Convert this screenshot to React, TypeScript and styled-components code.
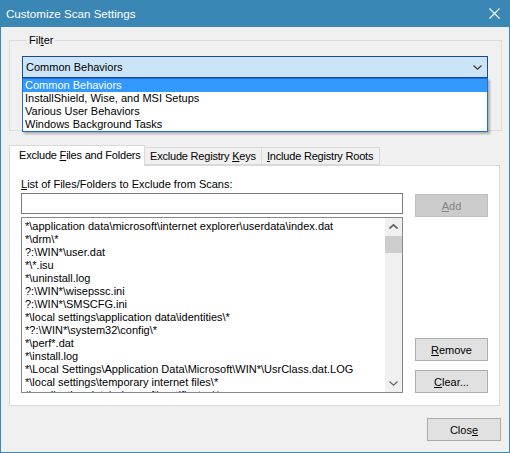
import React from 'react';
import styled, { createGlobalStyle } from 'styled-components';

const GlobalStyle = createGlobalStyle`
  html, body { margin: 0; padding: 0; background: #f0f0f0; }
  body {
    font-family: 'Liberation Sans', Arial, sans-serif;
    font-size: 11px;
    color: #000;
  }
  * { box-sizing: border-box; }
`;

const Window = styled.div`
  width: 510px;
  height: 453px;
  display: flex;
  flex-direction: column;
  background: #f0f0f0;
  border: 1px solid #3a86b4;
  border-top: none;
  overflow: hidden;
`;

const TitleBar = styled.div`
  height: 27px;
  flex-shrink: 0;
  margin: 0 -1px;
  background: #3a86b4;
  color: #fff;
  display: flex;
  align-items: center;
  justify-content: space-between;
  padding: 0 10px 1px 6px;
  font-size: 11.6px;
`;

const CloseGlyph = styled.svg`
  display: block;
`;

const Body = styled.div`
  flex: 1;
  min-height: 0;
  display: flex;
  flex-direction: column;
  padding: 6px 7px 11px 8px;
`;

const GroupBox = styled.fieldset`
  margin: 0;
  height: 98px;
  flex-shrink: 0;
  border: 1px solid #dcdcdc;
  padding: 7px 13px 0 12px;
  min-width: 0;
`;

const GroupLegend = styled.legend`
  margin-left: 5px;
  padding: 0 2px;
  line-height: 15px;
`;

const ComboWrap = styled.div`
  position: relative;
  margin-top: 1px;
`;

const Combo = styled.div`
  height: 22px;
  border: 1px solid #1a4a96;
  background: #cce4f7;
  display: flex;
  align-items: center;
  justify-content: space-between;
  padding: 0 5px 0 3px;
`;

const DropList = styled.div`
  position: absolute;
  top: 100%;
  left: 0;
  right: 0;
  z-index: 2;
  background: #fff;
  border: 1px solid #1c6fd8;
  box-shadow: 2px 2px 2px rgba(0, 0, 0, 0.28);
`;

const DropItem = styled.div<{ $selected?: boolean }>`
  height: 13px;
  line-height: 13px;
  padding-left: 2px;
  white-space: nowrap;
  background: ${(p) => (p.$selected ? '#3399ff' : 'transparent')};
  color: ${(p) => (p.$selected ? '#fff' : '#000')};
`;

const TabStrip = styled.div`
  margin-top: 14px;
  height: 20px;
  flex-shrink: 0;
  display: flex;
  align-items: flex-end;
`;

const Tab = styled.div<{ $active?: boolean; $width: number; $inset: number }>`
  width: ${(p) => p.$width}px;
  height: ${(p) => (p.$active ? '21px' : '18px')};
  margin-bottom: ${(p) => (p.$active ? '-1px' : '0')};
  margin-left: ${(p) => (p.$active ? '0' : '-1px')};
  padding: ${(p) => (p.$active ? '3px' : '2px')} 0 0 ${(p) => p.$inset}px;
  border: 1px solid #d9d9d9;
  border-bottom: ${(p) => (p.$active ? 'none' : '1px solid #d9d9d9')};
  background: ${(p) => (p.$active ? '#fff' : '#f0f0f0')};
  position: relative;
  z-index: ${(p) => (p.$active ? 1 : 0)};
  white-space: nowrap;
  overflow: hidden;
  line-height: 13px;
  letter-spacing: -0.2px;
`;

const TabPanel = styled.div`
  height: 241px;
  flex-shrink: 0;
  margin-right: 2px;
  background: #fff;
  border: 1px solid #d9d9d9;
  padding: 11px 11px 12px 11px;
  display: flex;
  flex-direction: column;
`;

const FieldLabel = styled.div`
  height: 15px;
  line-height: 15px;
  margin-bottom: 1px;
`;

const PanelRow = styled.div`
  flex: 1;
  min-height: 0;
  display: flex;
  gap: 12px;
`;

const InputColumn = styled.div`
  width: 382px;
  min-height: 0;
  display: flex;
  flex-direction: column;
  gap: 3px;
`;

const TextBox = styled.div`
  height: 21px;
  flex-shrink: 0;
  border: 1px solid #7a7a7a;
  background: #fff;
`;

const ListBox = styled.div`
  flex: 1;
  min-height: 0;
  display: flex;
  border: 1px solid #828790;
  background: #fff;
  overflow: hidden;
`;

const ListItems = styled.div`
  flex: 1;
  padding: 2px 3px 0 3px;
  overflow: hidden;
`;

const ListItem = styled.div`
  height: 13px;
  line-height: 13px;
  white-space: nowrap;
`;

const ScrollBar = styled.div`
  width: 17px;
  background: #f0f0f0;
  display: flex;
  flex-direction: column;
`;

const ScrollArrow = styled.div`
  height: 17px;
  display: flex;
  align-items: center;
  justify-content: center;
`;

const ScrollThumb = styled.div`
  height: 17px;
  background: #cdcdcd;
  margin: 1px 0 0 0;
`;

const ScrollTrack = styled.div`
  flex: 1;
`;

const ButtonColumn = styled.div`
  width: 73px;
  display: flex;
  flex-direction: column;
  padding-top: 1px;
  gap: 9px;
`;

const Spacer = styled.div`
  flex: 1;
`;

const Button = styled.div<{ $disabled?: boolean }>`
  height: 23px;
  flex-shrink: 0;
  display: flex;
  align-items: center;
  justify-content: center;
  background: ${(p) => (p.$disabled ? '#cccccc' : '#e1e1e1')};
  border: 1px solid ${(p) => (p.$disabled ? '#bfbfbf' : '#adadad')};
  color: ${(p) => (p.$disabled ? '#838383' : '#000')};
`;

const Footer = styled.div`
  margin-top: 12px;
  display: flex;
  justify-content: flex-end;
  padding-right: 1px;
`;

const FooterButton = styled(Button)`
  width: 74px;
`;

const Acc = styled.span`
  text-decoration: underline;
  text-underline-offset: 1px;
`;

const filters = [
  'Common Behaviors',
  'InstallShield, Wise, and MSI Setups',
  'Various User Behaviors',
  'Windows Background Tasks',
];

const exclusions = [
  '*\\application data\\microsoft\\internet explorer\\userdata\\index.dat',
  '*\\drm\\*',
  '?:\\WIN*\\user.dat',
  '*\\*.isu',
  '*\\uninstall.log',
  '?:\\WIN*\\wisepssc.ini',
  '?:\\WIN*\\SMSCFG.ini',
  '*\\local settings\\application data\\identities\\*',
  '*?:\\WIN*\\system32\\config\\*',
  '*\\perf*.dat',
  '*\\install.log',
  '*\\Local Settings\\Application Data\\Microsoft\\WIN*\\UsrClass.dat.LOG',
  '*\\local settings\\temporary internet files\\*',
  '*\\application data\\microsoft\\certificates\\*',
];

const Chevron = ({ up, color }: { up?: boolean; color: string }) => (
  <svg width="9" height="5" viewBox="0 0 9 5">
    <path
      d={up ? 'M0.5 4.5 L4.5 0.8 L8.5 4.5' : 'M0.5 0.5 L4.5 4.2 L8.5 0.5'}
      fill="none"
      stroke={color}
      strokeWidth={up ? 1.6 : 1.1}
    />
  </svg>
);

function App() {
  return (
    <>
      <GlobalStyle />
      <Window>
        <TitleBar>
          <span>Customize Scan Settings</span>
          <CloseGlyph width="11" height="11" viewBox="0 0 11 11">
            <path d="M0.5 0.5 L10.5 10.5 M10.5 0.5 L0.5 10.5" stroke="#fff" strokeWidth="1.1" />
          </CloseGlyph>
        </TitleBar>
        <Body>
          <GroupBox>
            <GroupLegend>
              Fil<Acc>t</Acc>er
            </GroupLegend>
            <ComboWrap>
              <Combo>
                <span>Common Behaviors</span>
                <Chevron color="#333" />
              </Combo>
              <DropList>
                {filters.map((f, i) => (
                  <DropItem key={f} $selected={i === 0}>
                    {f}
                  </DropItem>
                ))}
              </DropList>
            </ComboWrap>
          </GroupBox>

          <TabStrip>
            <Tab $active $width={136} $inset={9}>
              Exclude <Acc>F</Acc>iles and Folders
            </Tab>
            <Tab $width={118} $inset={5}>
              Exclude Registry <Acc>K</Acc>eys
            </Tab>
            <Tab $width={119} $inset={5}>
              <Acc>I</Acc>nclude Registry Roots
            </Tab>
          </TabStrip>
          <TabPanel>
            <FieldLabel>
              <Acc>L</Acc>ist of Files/Folders to Exclude from Scans:
            </FieldLabel>
            <PanelRow>
              <InputColumn>
                <TextBox />
                <ListBox>
                  <ListItems>
                    {exclusions.map((e) => (
                      <ListItem key={e}>{e}</ListItem>
                    ))}
                  </ListItems>
                  <ScrollBar>
                    <ScrollArrow>
                      <Chevron up color="#606060" />
                    </ScrollArrow>
                    <ScrollThumb />
                    <ScrollTrack />
                    <ScrollArrow>
                      <Chevron color="#606060" />
                    </ScrollArrow>
                  </ScrollBar>
                </ListBox>
              </InputColumn>
              <ButtonColumn>
                <Button $disabled>
                  <span>
                    <Acc>A</Acc>dd
                  </span>
                </Button>
                <Spacer />
                <Button>
                  <span>
                    <Acc>R</Acc>emove
                  </span>
                </Button>
                <Button>
                  <span>
                    <Acc>C</Acc>lear...
                  </span>
                </Button>
              </ButtonColumn>
            </PanelRow>
          </TabPanel>

          <Footer>
            <FooterButton>
              <span>
                Clos<Acc>e</Acc>
              </span>
            </FooterButton>
          </Footer>
        </Body>
      </Window>
    </>
  );
}

export default App;
